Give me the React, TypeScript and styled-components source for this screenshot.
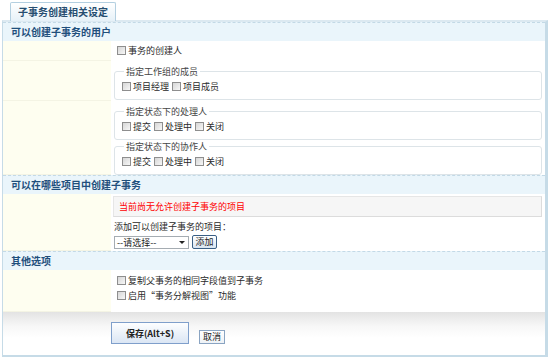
import React from "react";
import styled, { createGlobalStyle } from "styled-components";

const GlobalStyle = createGlobalStyle`
  html, body { margin: 0; padding: 0; background: #ffffff; }
  body { font-family: "Noto Sans CJK SC", "Noto Sans", sans-serif; font-size: 9px; color: #2a2a2a; }
  * { box-sizing: border-box; }
`;

const Page = styled.div`
  width: 550px;
  height: 363px;
  padding-top: 2px;
`;

const TabBar = styled.div`
  display: flex;
  padding-left: 10px;
  height: 18px;
`;

const Tab = styled.div`
  width: 106px;
  height: 19px;
  border: 1px solid #b3cfe0;
  border-bottom: none;
  border-radius: 2px 2px 0 0;
  background: linear-gradient(#ffffff, #e6f1f8);
  color: #264d70;
  font-weight: bold;
  font-size: 10px;
  line-height: 18px;
  text-align: center;
  position: relative;
  z-index: 1;
`;

const Panel = styled.div`
  margin-left: 2px;
  width: 546px;
  border-top: 2px solid #dce9f1;
  border-left: 1px solid #c6dbe7;
  border-right: 3px solid #c6dbe7;
  border-bottom: 2px solid #c6dbe7;
`;

const SectionHeader = styled.div`
  height: 19px;
  border-top: 1px dashed #c3d9e6;
  background: #eaf5fb;
  color: #1f4f7c;
  font-weight: bold;
  font-size: 10px;
  line-height: 18px;
  padding-left: 8px;
`;

const Row = styled.div<{ $h: number }>`
  display: flex;
  height: ${(p) => p.$h}px;
`;

const Label = styled.div`
  width: 108px;
  flex: none;
  background: #fefef0;
  border-bottom: 1px solid #f4f4e4;
`;

const Cell = styled.div<{ $pt?: number }>`
  flex: 1;
  padding: ${(p) => p.$pt ?? 0}px 3px 0 6px;
  display: flex;
  flex-direction: column;
`;

const Line = styled.div<{ $h?: number }>`
  display: flex;
  align-items: center;
  height: ${(p) => p.$h ?? 15}px;
  white-space: nowrap;
`;

const Box = styled.span`
  display: inline-block;
  width: 9px;
  height: 9px;
  border: 1px solid #8e8e8e;
  background: linear-gradient(135deg, #d6d6d6, #f7f7f7);
  margin-right: 2px;
  flex: none;
`;

const Item = styled.span`
  display: inline-flex;
  align-items: center;
  margin-right: 3px;
`;

const Check = ({ label }: { label: string }) => (
  <Item>
    <Box />
    {label}
  </Item>
);

const Group = styled.fieldset<{ $mt: number }>`
  margin: ${(p) => p.$mt}px 0 0 -3px;
  padding: 2px 7px 2px;
  border: 1px solid #dde4e8;
  border-radius: 3px;
  height: 34px;
  min-width: 0;
`;

const Legend = styled.legend`
  padding: 0 2px;
  margin-left: 2px;
  color: #444;
  line-height: 11px;
`;

const Notice = styled.div`
  margin: 2px 0 0 -4px;
  height: 21px;
  background: #f6f6f6;
  border: 1px solid #e6e6e6;
  border-right-color: #dcdcdc;
  border-bottom-color: #dcdcdc;
  color: #ff0000;
  line-height: 19px;
  padding-left: 5px;
`;

const Prompt = styled.div`
  height: 14px;
  margin: 3px 0 0 -3px;
  line-height: 14px;
  white-space: nowrap;
`;

const Controls = styled.div`
  display: flex;
  align-items: center;
  gap: 3px;
  margin: 1px 0 0 -3px;
`;

const Select = styled.div`
  width: 75px;
  height: 13px;
  border: 1px solid #a5acb2;
  background: #fff;
  display: flex;
  align-items: center;
  justify-content: space-between;
  padding: 0 3px 0 2px;
  line-height: 11px;
  color: #222;
`;

const Arrow = styled.span`
  width: 0;
  height: 0;
  border-left: 3px solid transparent;
  border-right: 3px solid transparent;
  border-top: 3px solid #222;
`;

const SmallButton = styled.button`
  font: inherit;
  height: 14px;
  width: 25px;
  padding: 0;
  border: 1px solid #3a5f85;
  border-radius: 2px;
  background: linear-gradient(#ffffff, #d9e5f2);
  color: #222;
  line-height: 12px;
`;

const Footer = styled.div`
  height: 43px;
  background: linear-gradient(#e3e3e3 0px, #f7f7f7 14px, #ffffff 26px);
  display: flex;
  align-items: flex-start;
  padding-left: 108px;
`;

const SaveButton = styled.button`
  font: inherit;
  font-weight: bold;
  margin-top: 10px;
  width: 78px;
  height: 22px;
  border: 1px solid #7f9fcb;
  background: linear-gradient(#fdfeff, #dbe6f4);
  color: #222;
  padding: 0;
`;

const CancelButton = styled.button`
  font: inherit;
  margin: 18px 0 0 10px;
  width: 26px;
  height: 14px;
  border: 1px solid #8aa4c2;
  background: linear-gradient(#ffffff, #eef2f6);
  color: #222;
  padding: 0;
  line-height: 12px;
`;

export default function App() {
  return (
    <Page>
      <GlobalStyle />
      <TabBar>
        <Tab>子事务创建相关设定</Tab>
      </TabBar>
      <Panel>
        <SectionHeader>可以创建子事务的用户</SectionHeader>
        <Row $h={20}>
          <Label />
          <Cell $pt={2}>
            <Line>
              <Check label="事务的创建人" />
            </Line>
          </Cell>
        </Row>
        <Row $h={40}>
          <Label />
          <Cell>
            <Group $mt={5}>
              <Legend>指定工作组的成员</Legend>
              <Line $h={14}>
                <Check label="项目经理" />
                <Check label="项目成员" />
              </Line>
            </Group>
          </Cell>
        </Row>
        <Row $h={74}>
          <Label />
          <Cell>
            <Group $mt={5}>
              <Legend>指定状态下的处理人</Legend>
              <Line $h={14}>
                <Check label="提交" />
                <Check label="处理中" />
                <Check label="关闭" />
              </Line>
            </Group>
            <Group $mt={1}>
              <Legend>指定状态下的协作人</Legend>
              <Line $h={14}>
                <Check label="提交" />
                <Check label="处理中" />
                <Check label="关闭" />
              </Line>
            </Group>
          </Cell>
        </Row>
        <SectionHeader>可以在哪些项目中创建子事务</SectionHeader>
        <Row $h={57}>
          <Label />
          <Cell>
            <Notice>当前尚无允许创建子事务的项目</Notice>
            <Prompt>添加可以创建子事务的项目：</Prompt>
            <Controls>
              <Select>
                <span>--请选择--</span>
                <Arrow />
              </Select>
              <SmallButton>添加</SmallButton>
            </Controls>
          </Cell>
        </Row>
        <SectionHeader>其他选项</SectionHeader>
        <Row $h={42}>
          <Label />
          <Cell $pt={3}>
            <Line>
              <Check label="复制父事务的相同字段值到子事务" />
            </Line>
            <Line>
              <Check label="启用“事务分解视图”功能" />
            </Line>
          </Cell>
        </Row>
        <Footer>
          <SaveButton>保存(Alt+S)</SaveButton>
          <CancelButton>取消</CancelButton>
        </Footer>
      </Panel>
    </Page>
  );
}
